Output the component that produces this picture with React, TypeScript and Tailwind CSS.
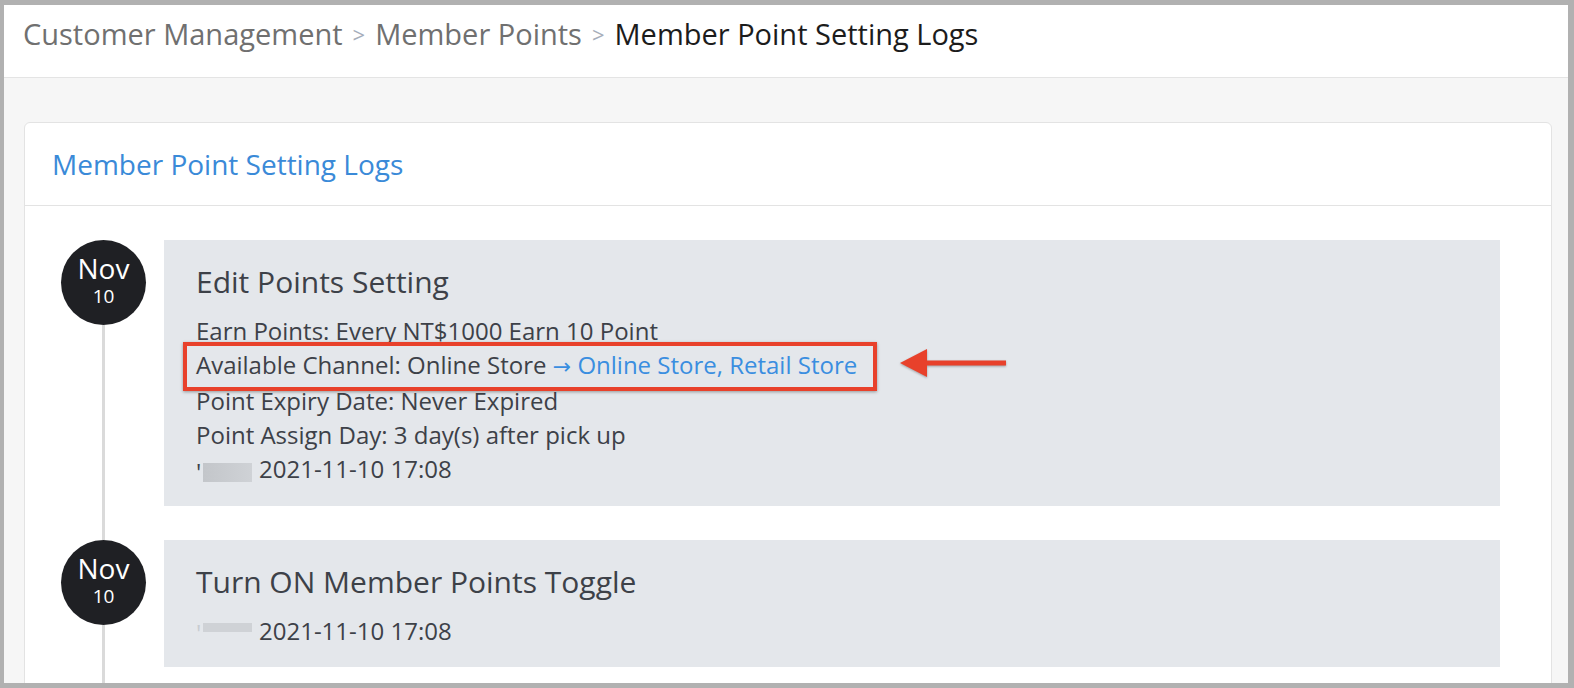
import React from 'react';

const font = { fontFamily: '"Open Sans", "Noto Sans", sans-serif' };

type Log = {
  title: string;
  lines: React.ReactNode[];
};

const NameBlur: React.FC<{ tall?: boolean }> = ({ tall }) => (
  <span className="inline-flex items-center mr-[7px] align-middle">
    <span className={tall ? 'text-[#3d4148] w-[7px]' : 'w-[7px] text-[#c8ccd1]'}>'</span>
    {tall ? (
      <span className="inline-block h-[19px] w-[49px] bg-gradient-to-r from-[#c3c6ca] to-[#cfd2d6] translate-y-[1px]" />
    ) : (
      <span className="inline-block h-[9px] w-[49px] bg-[#cfd2d6] -translate-y-[6px]" />
    )}
  </span>
);

const DateBadge: React.FC = () => (
  <div className="w-[85px] h-[85px] rounded-full bg-[#1f2024] text-white flex flex-col items-center justify-center pb-[4px] shrink-0">
    <span className="text-[28px] leading-[28px]">Nov</span>
    <span className="text-[19px] leading-[22px] mt-[3px]">10</span>
  </div>
);

const TimelineItem: React.FC<{ log: Log; last?: boolean }> = ({ log, last }) => (
  <div className="flex">
    <div className="flex flex-col items-center w-[85px] shrink-0">
      <DateBadge />
      <div className="w-[3px] flex-1 bg-[#dadada]" />
    </div>
    <div className={last ? 'flex-1 ml-[18px] pb-[60px]' : 'flex-1 ml-[18px] pb-[34px]'}>
      <div className="bg-[#e4e7eb] pl-[32px] pr-6 pt-[24px] pb-[17px] text-[#3d4148]">
        <div className="text-[30px] leading-[36px] mb-[14px]">{log.title}</div>
        {log.lines.map((line, i) => (
          <div key={i} className="text-[24px] leading-[34px] whitespace-nowrap">
            {line}
          </div>
        ))}
      </div>
    </div>
  </div>
);

export default function App() {
  const logs: Log[] = [
    {
      title: 'Edit Points Setting',
      lines: [
        'Earn Points: Every NT$1000 Earn 10 Point',
        <span className="relative inline-block">
          Available Channel: Online Store{' '}
          <span className="text-[#3a8ee0]">
            <span className="font-['DejaVu_Sans',sans-serif] text-[22px]">→</span> Online Store, Retail Store
          </span>
          {/* annotation box */}
          <span className="absolute -left-[13px] -right-[20px] -top-[6px] -bottom-[7px] border-[4px] border-[#e8412b] shadow-[0_1px_3px_rgba(0,0,0,0.35)]" />
          {/* annotation arrow */}
          <svg
            className="absolute left-[704px] top-[-1px] drop-shadow-[0_1px_1px_rgba(0,0,0,0.3)]"
            width="110"
            height="32"
            viewBox="0 0 110 32"
          >
            <polygon points="0,16 27,2 27,30" fill="#e8412b" />
            <rect x="24" y="13.5" width="82" height="5" fill="#e8412b" />
          </svg>
        </span>,
        'Point Expiry Date: Never Expired',
        'Point Assign Day: 3 day(s) after pick up',
        <span>
          <NameBlur tall />
          2021-11-10 17:08
        </span>,
      ],
    },
    {
      title: 'Turn ON Member Points Toggle',
      lines: [
        <span>
          <NameBlur />
          2021-11-10 17:08
        </span>,
      ],
    },
  ];

  return (
    <div
      className="h-[688px] bg-[#b1b1b1] pt-[5px] pl-[4px] pr-[6px] pb-[5px]"
      style={font}
    >
      <div className="h-full flex flex-col bg-[#f6f6f6] overflow-hidden">
        {/* Breadcrumb */}
        <header className="h-[73px] shrink-0 bg-white border-b border-[#e4e4e4] pl-[19px] pt-[9px]">
          <div className="flex items-center text-[29px] leading-[40px]">
            <span className="text-[#707070]">Customer Management</span>
            <span className="text-[#a6adba] text-[22px] mx-[10px]">&gt;</span>
            <span className="text-[#707070]">Member Points</span>
            <span className="text-[#a6adba] text-[22px] mx-[10px]">&gt;</span>
            <span className="text-[#1c1c1c]">Member Point Setting Logs</span>
          </div>
        </header>

        {/* Content */}
        <main className="flex-1 min-h-0 pt-[44px] pl-[20px] pr-[16px]">
          <section className="bg-white border border-[#e3e3e3] rounded-[6px] h-[600px]">
            <div className="h-[83px] border-b border-[#e3e3e3] pl-[27px] flex items-center">
              <h2 className="text-[28px] text-[#3a8ad8]">Member Point Setting Logs</h2>
            </div>
            <div className="pt-[34px] pl-[36px] pr-[51px]">
              {logs.map((log, i) => (
                <TimelineItem key={i} log={log} last={i === logs.length - 1} />
              ))}
            </div>
          </section>
        </main>
      </div>
    </div>
  );
}
